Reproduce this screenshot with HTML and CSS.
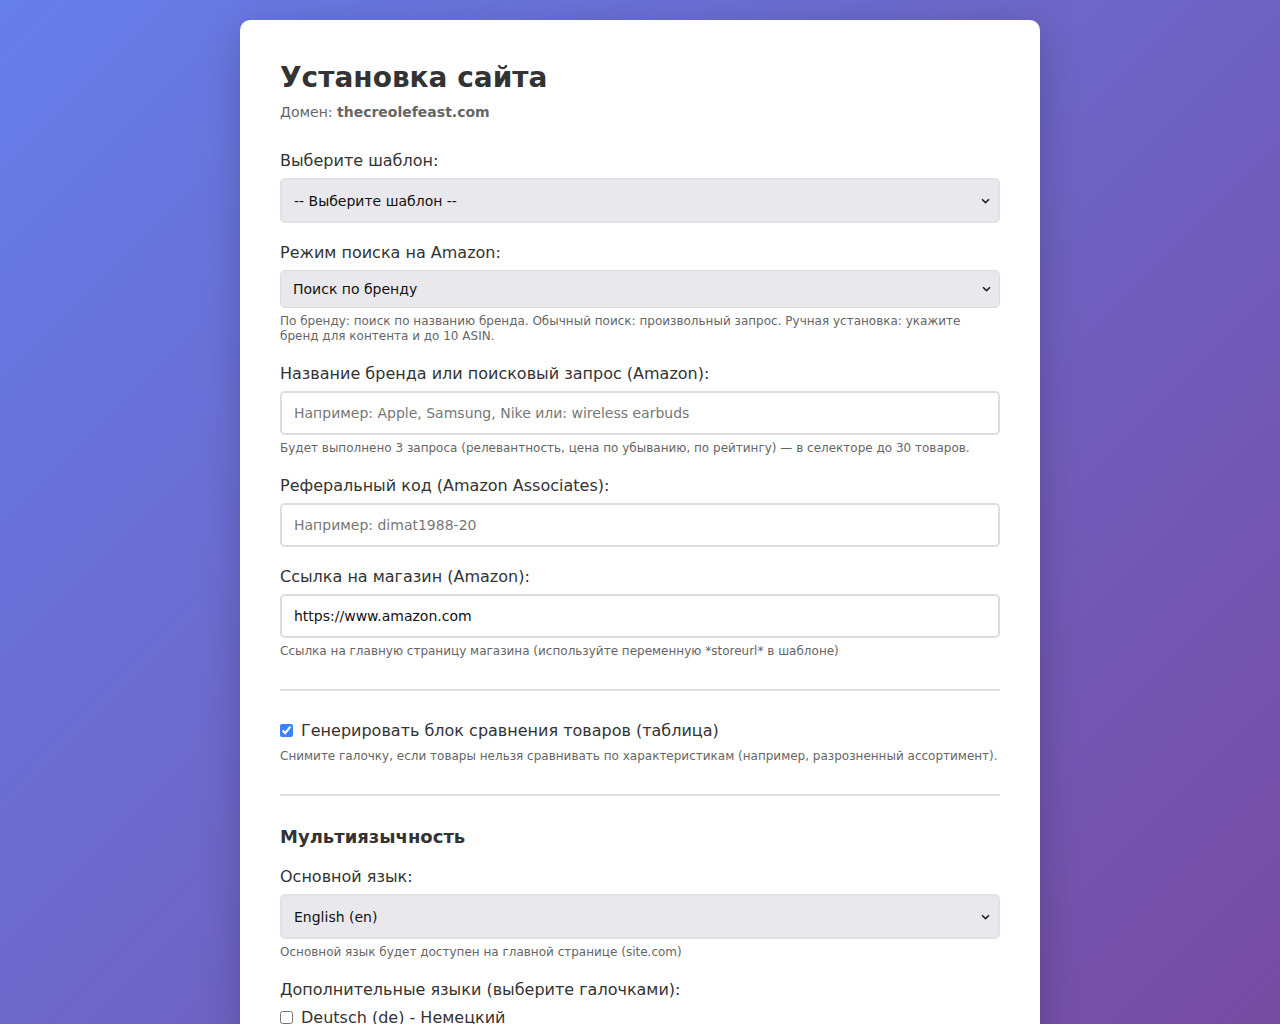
FILE: index.html
```html
<!DOCTYPE html>
<html lang="ru">
  <head>
    <meta charset="UTF-8" />
    <meta name="viewport" content="width=device-width, initial-scale=1.0" />
    <title>Установка сайта</title>
    <link rel="stylesheet" href="styles.css">
  </head>
  <body>
    <div class="container">
      <h1>Установка сайта</h1>
      <p class="domain">Домен: <strong>thecreolefeast.com</strong></p>

      <form class="setup-form">
        <div class="form-group">
          <label for="template">Выберите шаблон:</label>
          <select id="template" class="select-big">
            <option>-- Выберите шаблон --</option>
          </select>
        </div>

        <div class="form-group">
          <label for="mode">Режим поиска на Amazon:</label>
          <select id="mode" class="select-small">
            <option>Поиск по бренду</option>
            <option>Обычный поиск</option>
            <option>Ручная установка</option>
          </select>
          <small class="hint">По бренду: поиск по названию бренда. Обычный поиск: произвольный запрос. Ручная установка: укажите бренд для контента и до 10 ASIN.</small>
        </div>

        <div class="form-group">
          <label for="brand">Название бренда или поисковый запрос (Amazon):</label>
          <input type="text" id="brand" placeholder="Например: Apple, Samsung, Nike или: wireless earbuds">
          <small class="hint">Будет выполнено 3 запроса (релевантность, цена по убыванию, по рейтингу) — в селекторе до 30 товаров.</small>
        </div>

        <div class="form-group">
          <label for="ref">Реферальный код (Amazon Associates):</label>
          <input type="text" id="ref" placeholder="Например: dimat1988-20">
        </div>

        <div class="form-group">
          <label for="store">Ссылка на магазин (Amazon):</label>
          <input type="text" id="store" value="https://www.amazon.com">
          <small class="hint">Ссылка на главную страницу магазина (используйте переменную *storeurl* в шаблоне)</small>
        </div>

        <hr>

        <div class="form-group">
          <label class="check-label">
            <input type="checkbox" checked>
            Генерировать блок сравнения товаров (таблица)
          </label>
          <small class="hint">Снимите галочку, если товары нельзя сравнивать по характеристикам (например, разрозненный ассортимент).</small>
        </div>

        <hr>

        <h3>Мультиязычность</h3>

        <div class="form-group">
          <label for="lang">Основной язык:</label>
          <select id="lang" class="select-big">
            <option>English (en)</option>
            <option>Deutsch (de)</option>
          </select>
          <small class="hint">Основной язык будет доступен на главной странице (site.com)</small>
        </div>

        <div class="form-group">
          <label>Дополнительные языки (выберите галочками):</label>
          <div class="lang-list">
            <label class="lang-item"><input type="checkbox"> Deutsch (de) - Немецкий</label>
            <label class="lang-item"><input type="checkbox"> Français (fr) - Французский</label>
            <label class="lang-item"><input type="checkbox"> Español (es) - Испанский</label>
            <label class="lang-item"><input type="checkbox"> Italiano (it) - Итальянский</label>
          </div>
        </div>

        <button type="submit" class="btn">Установить сайт</button>
      </form>
    </div>
  </body>
</html>
```

FILE: styles.css
```css
body {
  margin: 0;
  padding: 20px;
  min-height: 100vh;
  box-sizing: border-box;
  background: linear-gradient(135deg, #667eea 0%, #764ba2 100%);
  background-attachment: fixed;
  font-family: "DejaVu Sans", sans-serif;
  color: #333;
}
.container {
  max-width: 720px;
  margin: 0 auto;
  background: #fff;
  border-radius: 10px;
  padding: 40px;
  box-shadow: 0 10px 40px rgba(0, 0, 0, 0.2);
}
h1 {
  margin: 0 0 10px;
  padding-top: 1px;
  font-size: 28px;
  color: #333;
}
.domain {
  margin: 0 0 31px;
  font-size: 14px;
  color: #666;
}
.form-group {
  margin-bottom: 20px;
}
label {
  display: block;
  margin-bottom: 8px;
  font-size: 16px;
  color: #333;
}
select,
input[type="text"] {
  display: block;
  width: 100%;
  box-sizing: border-box;
  font-family: "DejaVu Sans", sans-serif;
  font-size: 14px;
  border-radius: 5px;
}
input[type="text"] {
  height: 44px;
  padding: 12px;
  border: 2px solid #ddd;
  color: #111;
  background: #fff;
}
input[type="text"]::placeholder {
  color: #777;
}
select {
  appearance: none;
  -webkit-appearance: none;
  background-color: #e9e9ed;
  background-image: url("data:image/svg+xml,%3Csvg xmlns='http://www.w3.org/2000/svg' width='9' height='6' viewBox='0 0 9 6'%3E%3Cpath d='M1 1.2 L4.5 4.6 L8 1.2' fill='none' stroke='%23222' stroke-width='1.6'/%3E%3C/svg%3E");
  background-repeat: no-repeat;
  background-position: right 8px center;
  background-size: 9px 6px;
  color: #111;
}
.select-big {
  height: 45px;
  padding: 0 24px 0 12px;
  border: 2px solid #e2e2e6;
}
.select-small {
  height: 38px;
  padding: 0 24px 0 12px;
  border: 1px solid #dcdce0;
}
.hint {
  display: block;
  margin-top: 6px;
  font-size: 12px;
  line-height: 15px;
  color: #666;
}
hr {
  border: none;
  border-top: 2px solid #e0e0e0;
  margin: 30px 0;
}
.check-label {
  display: flex;
  align-items: center;
  gap: 8px;
  margin-bottom: 9px;
  font-size: 16px;
  cursor: pointer;
}
.check-label input {
  margin: 0;
  width: 13px;
  height: 13px;
  accent-color: #3b82f6;
}
h3 {
  margin: 0 0 20px;
  font-size: 18px;
  color: #333;
}
.lang-list {
  display: flex;
  flex-direction: column;
  gap: 6px;
  padding-top: 1px;
}
.lang-item {
  display: flex;
  align-items: center;
  gap: 8px;
  margin: 0;
  font-size: 16px;
}
.lang-item input {
  margin: 0;
}
.btn {
  display: block;
  width: 100%;
  padding: 14px;
  border: none;
  border-radius: 5px;
  background: linear-gradient(135deg, #667eea 0%, #764ba2 100%);
  color: #fff;
  font-size: 16px;
  font-family: "DejaVu Sans", sans-serif;
  cursor: pointer;
}
```
